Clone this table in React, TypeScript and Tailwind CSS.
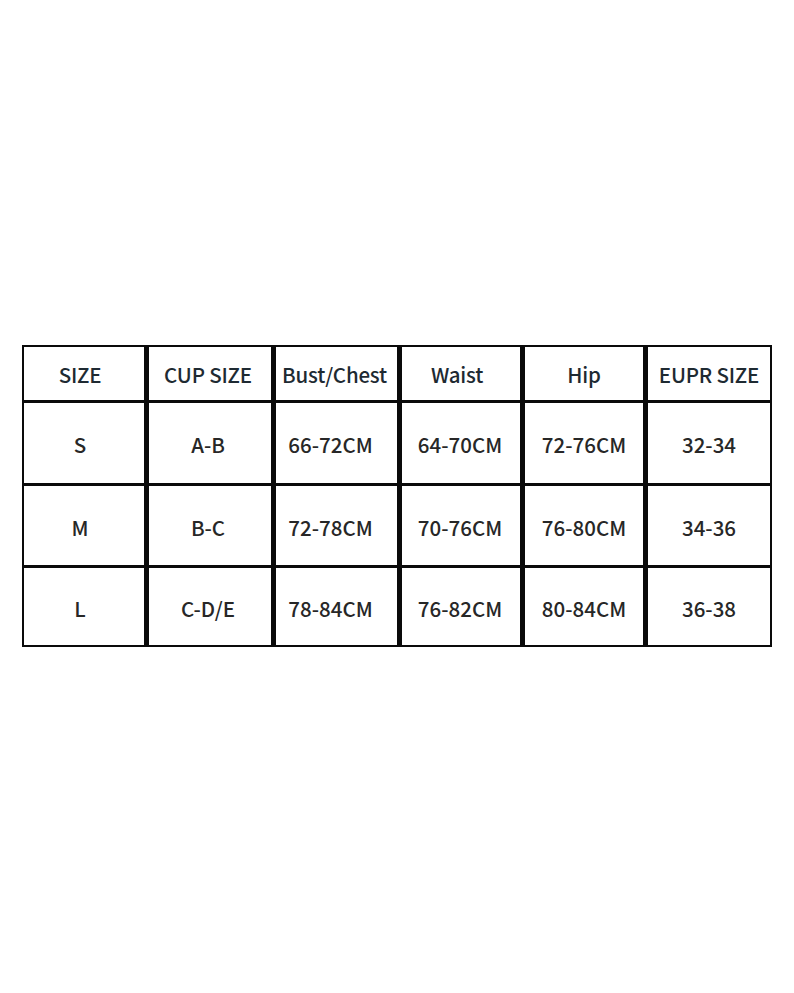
const headers = ['SIZE', 'CUP SIZE', 'Bust/Chest', 'Waist', 'Hip', 'EUPR SIZE']

const rows = [
  ['S', 'A-B', '66-72CM', '64-70CM', '72-76CM', '32-34'],
  ['M', 'B-C', '72-78CM', '70-76CM', '76-80CM', '34-36'],
  ['L', 'C-D/E', '78-84CM', '76-82CM', '80-84CM', '36-38'],
]

// text in the chart sits a little left of centre in the first columns
const headPad = ['pr-[8px]', 'pr-[4px]', 'pr-[4px]', 'pr-[8px]', '', '']
const cellPad = ['pr-[8px]', 'pr-[4px]', 'pr-[12px]', 'pr-[2px]', '', '']

export default function App() {
  return (
    <div className="min-h-[993px] w-[794px] bg-white pt-[345px] pl-[22px] font-['Noto_Sans_CJK_SC','Noto_Sans',sans-serif]">
      {/* size chart — black background shows through the gaps as the grid lines */}
      <div className="grid w-[750px] grid-cols-[120px_122px_121px_118px_118px_122px] grid-rows-[53px_80px_79px_77px] gap-x-[5px] gap-y-[3px] bg-[#0a0a0a] p-[2px]">
        {headers.map((h, i) => (
          <div key={h} className={`flex items-center justify-center bg-white pt-[1px] text-[20.5px] font-medium tracking-[-0.2px] text-[#1e2a32] ${headPad[i]}`}>
            {h}
          </div>
        ))}
        {rows.map(r =>
          r.map((cell, i) => (
            <div key={r[0] + i} className={`flex items-center justify-center bg-white pt-[3px] text-[20.5px] font-medium text-[#272727] ${cellPad[i]}`}>
              {cell}
            </div>
          )),
        )}
      </div>
    </div>
  )
}
